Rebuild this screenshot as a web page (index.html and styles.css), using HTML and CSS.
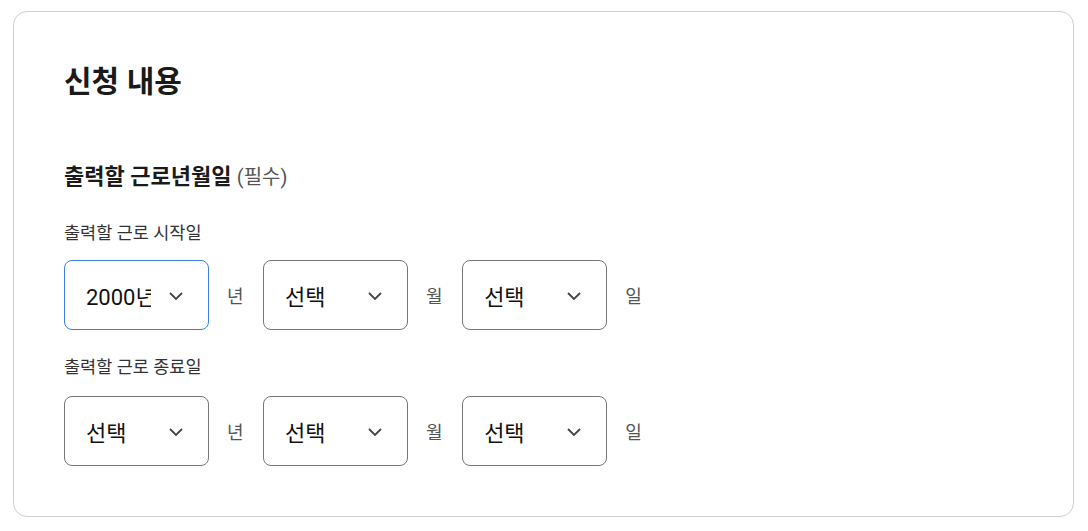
FILE: index.html
```html
<!DOCTYPE html>
<html lang="ko">
<head>
<meta charset="utf-8">
<link rel="stylesheet" href="styles.css">
</head>
<body>
<div class="page">
  <section class="card">
    <h2 class="title">신청 내용</h2>
    <h3 class="subtitle">출력할 근로년월일 <span class="req">(필수)</span></h3>

    <div class="field">
      <div class="label">출력할 근로 시작일</div>
      <div class="row">
        <div class="select active"><span class="value">2000년</span><svg class="chev" viewBox="0 0 14 8"><path d="M1 1l6 6 6-6"/></svg></div>
        <span class="unit">년</span>
        <div class="select"><span class="value">선택</span><svg class="chev" viewBox="0 0 14 8"><path d="M1 1l6 6 6-6"/></svg></div>
        <span class="unit">월</span>
        <div class="select"><span class="value">선택</span><svg class="chev" viewBox="0 0 14 8"><path d="M1 1l6 6 6-6"/></svg></div>
        <span class="unit">일</span>
      </div>
    </div>

    <div class="field">
      <div class="label">출력할 근로 종료일</div>
      <div class="row">
        <div class="select"><span class="value">선택</span><svg class="chev" viewBox="0 0 14 8"><path d="M1 1l6 6 6-6"/></svg></div>
        <span class="unit">년</span>
        <div class="select"><span class="value">선택</span><svg class="chev" viewBox="0 0 14 8"><path d="M1 1l6 6 6-6"/></svg></div>
        <span class="unit">월</span>
        <div class="select"><span class="value">선택</span><svg class="chev" viewBox="0 0 14 8"><path d="M1 1l6 6 6-6"/></svg></div>
        <span class="unit">일</span>
      </div>
    </div>
  </section>
</div>
</body>
</html>
```

FILE: styles.css
```css
* { box-sizing: border-box; }
body {
  margin: 0;
  background: #fff;
  font-family: Roboto, "Noto Sans CJK KR", "Noto Sans", sans-serif;
  color: #222;
}
.page {
  padding: 11px 14px 14px 13px;
}
.card {
  border: 1px solid #cfcfcf;
  border-radius: 14px;
  padding: 50px 50px 50px 50px;
  height: 506px;
}
.title {
  margin: 0;
  font-size: 30px;
  line-height: 40px;
  font-weight: 700;
  color: #1a1a1a;
}
.subtitle {
  margin: 60px 0 0;
  font-size: 22px;
  line-height: 30px;
  font-weight: 700;
  color: #1a1a1a;
}
.req {
  font-size: 20px;
  font-weight: 400;
  color: #555;
}
.field { margin-top: 29px; }
.field + .field { margin-top: 25px; }
.label {
  font-size: 17.5px;
  line-height: 24px;
  color: #333;
}
.row {
  display: flex;
  align-items: center;
  margin-top: 15px;
}
.field + .field .row { margin-top: 17px; }
.select {
  width: 145px;
  height: 70px;
  border: 1px solid #767676;
  border-radius: 8px;
  display: flex;
  align-items: center;
  position: relative;
  padding-left: 21px;
}
.select.active {
  border-color: #3b7ee8;
}
.value {
  font-size: 22px;
  color: #111;
  width: 65px;
  overflow: hidden;
  white-space: nowrap;
}
.chev {
  position: absolute;
  right: 25px;
  top: 31px;
  width: 14px;
  height: 8px;
  fill: none;
  stroke: #444;
  stroke-width: 1.8;
}
.unit {
  font-size: 18px;
  color: #555;
  margin: 0 19.5px 0 18px;
}
```
